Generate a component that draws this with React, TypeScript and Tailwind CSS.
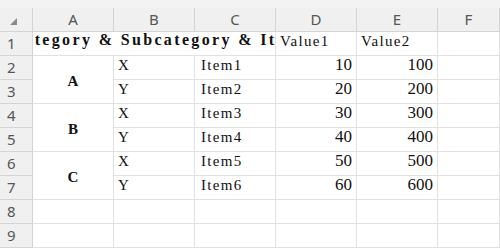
import React from "react";

const cols = ["A", "B", "C", "D", "E", "F"];

const rows = [
  { sub: "X", item: "Item1", v1: 10, v2: 100 },
  { sub: "Y", item: "Item2", v1: 20, v2: 200 },
  { sub: "X", item: "Item3", v1: 30, v2: 300 },
  { sub: "Y", item: "Item4", v1: 40, v2: 400 },
  { sub: "X", item: "Item5", v1: 50, v2: 500 },
  { sub: "Y", item: "Item6", v1: 60, v2: 600 },
];

const groups = ["A", "B", "C"];

const cell = "border-r border-b border-[#e1e1e1] bg-white overflow-hidden";
const txt = "font-['Liberation_Serif',serif] text-[15px] tracking-[1.3px] text-[#111]";
const num = "font-['Liberation_Serif',serif] text-[17px] text-[#111]";

export default function App() {
  return (
    <div className="w-[500px] h-[248px] overflow-hidden bg-[#f3f3f3] font-['Noto_Sans',sans-serif]">
      <div className="h-2" />
      <div className="grid grid-cols-[33px_repeat(5,81px)_1fr] grid-rows-[24px_repeat(9,24px)]">
        {/* column headers */}
        <div className="relative border-r border-b border-[#d4d4d4] bg-[#f0f0f0]">
          <svg className="absolute left-[10px] top-[10px]" width="7" height="7" viewBox="0 0 7 7">
            <polygon points="0,7 7,7 7,0" fill="#8a8a8a" />
          </svg>
        </div>
        {cols.map((c) => (
          <div
            key={c}
            className="flex items-center justify-center border-r border-b border-[#d4d4d4] bg-[#f0f0f0] text-[15px] text-[#555]"
          >
            {c}
          </div>
        ))}

        {/* row numbers */}
        {Array.from({ length: 9 }, (_, i) => (
          <div
            key={i}
            style={{ gridRow: i + 2, gridColumn: 1 }}
            className="flex items-center pl-[7px] border-r border-b border-[#d4d4d4] bg-[#f0f0f0] text-[15px] text-[#555]"
          >
            {i + 1}
          </div>
        ))}

        {/* row 1: merged title and value headers */}
        <div className={`${cell} col-[2/5] row-[2] flex items-end justify-center pb-[3px] pl-[4px]`}>
          <span className="whitespace-nowrap font-['Liberation_Serif',serif] font-bold text-[16px] tracking-[2.35px] text-[#111]">
            Category &amp; Subcategory &amp; Item
          </span>
        </div>
        <div className={`${cell} col-[5] row-[2] flex items-end pl-1 pb-[3px] ${txt}`}>Value1</div>
        <div className={`${cell} col-[6] row-[2] flex items-end pl-1 pb-[3px] ${txt}`}>Value2</div>
        <div className={`${cell} col-[7] row-[2]`} />

        {/* merged category cells */}
        {groups.map((g, i) => (
          <div
            key={g}
            style={{ gridColumn: 2, gridRow: `${3 + i * 2} / span 2` }}
            className={`${cell} flex items-center justify-center pt-[4px] font-['Liberation_Serif',serif] font-bold text-[15px] text-[#111]`}
          >
            {g}
          </div>
        ))}

        {rows.map((r, i) => (
          <React.Fragment key={r.item}>
            <div style={{ gridColumn: 3, gridRow: i + 3 }} className={`${cell} flex items-end pl-1 pb-[3px] ${txt}`}>
              {r.sub}
            </div>
            <div style={{ gridColumn: 4, gridRow: i + 3 }} className={`${cell} flex items-end pl-[6px] pb-[3px] ${txt}`}>
              {r.item}
            </div>
            <div style={{ gridColumn: 5, gridRow: i + 3 }} className={`${cell} flex items-end justify-end pr-1 pb-[2px] ${num}`}>
              {r.v1}
            </div>
            <div style={{ gridColumn: 6, gridRow: i + 3 }} className={`${cell} flex items-end justify-end pr-1 pb-[2px] ${num}`}>
              {r.v2}
            </div>
            <div style={{ gridColumn: 7, gridRow: i + 3 }} className={cell} />
          </React.Fragment>
        ))}

        {/* empty rows 8-9 */}
        {[9, 10].map((row) =>
          [2, 3, 4, 5, 6, 7].map((col) => (
            <div key={`${row}-${col}`} style={{ gridColumn: col, gridRow: row }} className={cell} />
          ))
        )}
      </div>
    </div>
  );
}
